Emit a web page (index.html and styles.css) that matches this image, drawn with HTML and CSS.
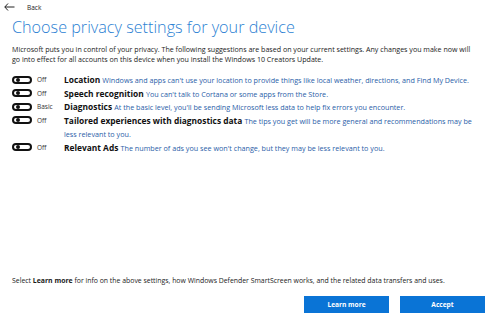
FILE: index.html
```html
<!DOCTYPE html>
<html lang="en">
<head>
    <meta charset="UTF-8">
    <meta name="viewport" content="width=device-width, initial-scale=1.0">
    <title>Privacy settings</title>
    <link rel="stylesheet" href="styles.css">
</head>
<body>
    <div class="page">
        <div class="topbar">
            <svg class="back-arrow" width="11" height="8" viewBox="0 0 11 8">
                <path d="M4 0.5 L0.8 4 L4 7.5 M0.8 4 H10.5" fill="none" stroke="#222" stroke-width="1"/>
            </svg>
            <span class="back-label">Back</span>
        </div>

        <h1 class="title">Choose privacy settings for your device</h1>

        <p class="intro">Microsoft puts you in control of your privacy. The following suggestions are based on your current settings. Any changes you make now will go into effect for all accounts on this device when you install the Windows 10 Creators Update.</p>

        <!-- Settings list -->
        <div class="settings">
            <div class="setting">
                <div class="switch-col"><span class="switch"></span><span class="state">Off</span></div>
                <div class="text"><b>Location</b> <span class="desc">Windows and apps can't use your location to provide things like local weather, directions, and Find My Device.</span></div>
            </div>
            <div class="setting">
                <div class="switch-col"><span class="switch"></span><span class="state">Off</span></div>
                <div class="text"><b>Speech recognition</b> <span class="desc">You can't talk to Cortana or some apps from the Store.</span></div>
            </div>
            <div class="setting">
                <div class="switch-col"><span class="switch"></span><span class="state">Basic</span></div>
                <div class="text"><b>Diagnostics</b> <span class="desc">At the basic level, you'll be sending Microsoft less data to help fix errors you encounter.</span></div>
            </div>
            <div class="setting">
                <div class="switch-col"><span class="switch"></span><span class="state">Off</span></div>
                <div class="text"><b>Tailored experiences with diagnostics data</b> <span class="desc">The tips you get will be more general and recommendations may be less relevant to you.</span></div>
            </div>
            <div class="setting">
                <div class="switch-col"><span class="switch"></span><span class="state">Off</span></div>
                <div class="text"><b>Relevant Ads</b> <span class="desc">The number of ads you see won't change, but they may be less relevant to you.</span></div>
            </div>
        </div>

        <div class="footer">
            <p class="footnote">Select <b>Learn more</b> for info on the above settings, how Windows Defender SmartScreen works, and the related data transfers and uses.</p>
            <div class="buttons">
                <button class="btn">Learn more</button>
                <button class="btn">Accept</button>
            </div>
        </div>
    </div>
</body>
</html>
```

FILE: styles.css
```css
body {
    margin: 0;
    background-color: #ffffff;
    font-family: "Open Sans", "Noto Sans", sans-serif;
    color: #1a1a1a;
}

.page {
    height: 100vh;
    box-sizing: border-box;
    padding: 1px 5px 6px 12px;
    display: flex;
    flex-direction: column;
}

.topbar {
    display: flex;
    align-items: center;
    height: 12px;
    margin-left: -8px;
}

.back-arrow {
    display: block;
}

.back-label {
    font-size: 6.5px;
    margin-left: 12px;
    color: #222;
}

.title {
    margin: 3px 0 0 0;
    font-weight: 300;
    font-size: 16.2px;
    line-height: 22px;
    color: #2b7fd3;
}

.intro {
    margin: 6px 0 0 0;
    padding-right: 8px;
    font-size: 7.1px;
    line-height: 10px;
    color: #1a1a1a;
}

.settings {
    margin-top: 9px;
    display: flex;
    flex-direction: column;
}

.setting {
    display: flex;
    align-items: flex-start;
}

.switch-col {
    width: 52px;
    flex-shrink: 0;
    display: flex;
    align-items: center;
    height: 13.5px;
}

.switch {
    width: 16px;
    height: 4px;
    border: 2px solid #111;
    border-radius: 5px;
    position: relative;
    box-sizing: content-box;
}

.switch::after {
    content: "";
    position: absolute;
    left: 2px;
    top: 0;
    width: 4px;
    height: 4px;
    border-radius: 50%;
    background-color: #111;
}

.state {
    font-size: 6.5px;
    margin-left: 5px;
    color: #333;
}

.text {
    font-size: 8.4px;
    line-height: 13.5px;
    color: #111;
    padding-right: 12px;
}

.text b {
    font-weight: 700;
}

.desc {
    font-size: 7.2px;
    line-height: 9px;
    color: #2a5ea8;
}

.footer {
    margin-top: auto;
}

.footnote {
    margin: 0;
    font-size: 6.9px;
    line-height: 10px;
    color: #1a1a1a;
}

.buttons {
    display: flex;
    justify-content: flex-end;
    gap: 11px;
    margin-top: 10px;
}

.btn {
    width: 85px;
    height: 17px;
    border: none;
    background-color: #0a74d6;
    color: #ffffff;
    font-family: "Open Sans", "Noto Sans", sans-serif;
    font-weight: 700;
    font-size: 6.6px;
    padding: 0;
}
```
